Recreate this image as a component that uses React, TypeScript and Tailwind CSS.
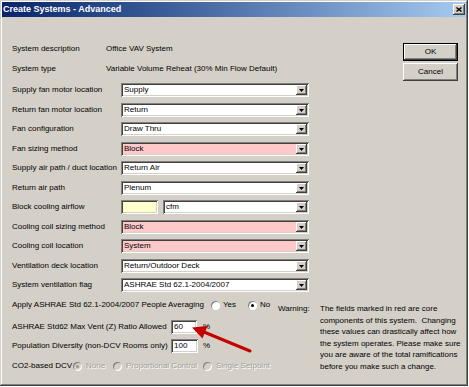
import React from "react";

const sunken =
  "shadow-[inset_1px_1px_0_#808080,inset_-1px_-1px_0_#ffffff,inset_2px_2px_0_#404040,inset_-2px_-2px_0_#d4d0c8]";
const raised =
  "shadow-[inset_-1px_-1px_0_#404040,inset_1px_1px_0_#ffffff,inset_-2px_-2px_0_#808080,inset_2px_2px_0_#d4d0c8]";

function Arrow() {
  return (
    <div className={`w-[11px] h-full bg-[#d4d0c8] ${raised} flex items-center justify-center shrink-0`}>
      <svg width="5" height="3" viewBox="0 0 5 3">
        <path d="M0 0H5L2.5 3Z" fill="#000" />
      </svg>
    </div>
  );
}

function Combo({ text, bg, w }: { text: string; bg: string; w: string }) {
  return (
    <div className={`flex h-[14px] ${w} ${bg} ${sunken} p-[2px]`}>
      <div className="flex-1 pl-[1px] flex items-center leading-none">{text}</div>
      <Arrow />
    </div>
  );
}

function Row({ label, mt, children }: { label: string; mt: string; children: React.ReactNode }) {
  return (
    <div className={`flex items-center h-[14px] ${mt}`}>
      <div className="w-[109px] whitespace-nowrap leading-none">{label}</div>
      {children}
    </div>
  );
}

function Radio({ checked, disabled }: { checked?: boolean; disabled?: boolean }) {
  return (
    <span
      className={`w-[9px] h-[9px] rounded-full flex items-center justify-center shrink-0 shadow-[inset_1px_1px_0_#808080,inset_-1px_-1px_0_#ffffff] ${
        disabled ? "bg-[#d4d0c8]" : "bg-white"
      }`}
    >
      {checked ? (
        <span className={`w-[3px] h-[3px] rounded-full ${disabled ? "bg-[#9a9890]" : "bg-black"}`} />
      ) : null}
    </span>
  );
}

export default function App() {
  const red = "bg-[#ffc9c9]";
  const white = "bg-white";
  const full = "w-[188px]";
  return (
    <div className="relative w-[469px] h-[387px] bg-white font-['Liberation_Sans',Arial,sans-serif] text-[8px] text-black">
      <div className="w-[468px] h-[386px] bg-[#d4d0c8] p-[2px] flex flex-col shadow-[inset_-1px_-1px_0_#404040,inset_1px_1px_0_#d4d0c8,inset_-2px_-2px_0_#808080,inset_2px_2px_0_#ffffff]">
        {/* Title bar */}
        <div className="h-[15px] flex items-center bg-gradient-to-r from-[#0a246a] to-[#a6caf0] shrink-0">
          <span className="pl-[1px] text-white font-bold text-[9px] leading-none whitespace-nowrap">
            Create Systems - Advanced
          </span>
          <div className={`ml-auto mr-[1px] w-[12px] h-[11px] bg-[#d4d0c8] ${raised} flex items-center justify-center`}>
            <svg width="6" height="5" viewBox="0 0 6 5">
              <path d="M0.5 0.5L5.5 4.5M5.5 0.5L0.5 4.5" stroke="#000" strokeWidth="1.4" />
            </svg>
          </div>
        </div>

        {/* Top section */}
        <div className="flex">
          <div className="pl-[10px] flex flex-col">
            <div className="flex items-center h-[14px] mt-[25px]">
              <div className="w-[94px] leading-none">System description</div>
              <div className="leading-none whitespace-nowrap">Office VAV System</div>
            </div>
            <div className="flex items-center h-[14px] mt-[6px]">
              <div className="w-[94px] leading-none">System type</div>
              <div className="leading-none whitespace-nowrap">Variable Volume Reheat (30% Min Flow Default)</div>
            </div>
            <Row label="Supply fan motor location" mt="mt-[7px]">
              <Combo text="Supply" bg={white} w={full} />
            </Row>
            <Row label="Return fan motor location" mt="mt-[6px]">
              <Combo text="Return" bg={white} w={full} />
            </Row>
            <Row label="Fan configuration" mt="mt-[5px]">
              <Combo text="Draw Thru" bg={white} w={full} />
            </Row>
            <Row label="Fan sizing method" mt="mt-[6px]">
              <Combo text="Block" bg={red} w={full} />
            </Row>
            <Row label="Supply air path / duct location" mt="mt-[5px]">
              <Combo text="Return Air" bg={white} w={full} />
            </Row>
            <Row label="Return air path" mt="mt-[6px]">
              <Combo text="Plenum" bg={white} w={full} />
            </Row>
            <Row label="Block cooling airflow" mt="mt-[5px]">
              <div className={`h-[14px] w-[37px] bg-[#ffffcc] ${sunken}`} />
              <div className="ml-[5px]">
                <Combo text="cfm" bg={white} w="w-[146px]" />
              </div>
            </Row>
            <Row label="Cooling coil sizing method" mt="mt-[6px]">
              <Combo text="Block" bg={red} w={full} />
            </Row>
            <Row label="Cooling coil location" mt="mt-[5px]">
              <Combo text="System" bg={red} w={full} />
            </Row>
            <Row label="Ventilation deck location" mt="mt-[6px]">
              <Combo text="Return/Outdoor Deck" bg={white} w={full} />
            </Row>
            <Row label="System ventilation flag" mt="mt-[5px]">
              <Combo text="ASHRAE Std 62.1-2004/2007" bg={white} w={full} />
            </Row>
          </div>
          <div className="ml-[94px] flex flex-col">
            <div className="mt-[26px] w-[55px] h-[18px] bg-black p-[1px]">
              <div className={`w-full h-full bg-[#d4d0c8] ${raised} flex items-center justify-center leading-none`}>
                OK
              </div>
            </div>
            <div className={`mt-[2px] w-[55px] h-[18px] bg-[#d4d0c8] ${raised} flex items-center justify-center leading-none`}>
              Cancel
            </div>
          </div>
        </div>

        {/* Bottom section */}
        <div className="flex pl-[10px]">
          <div className="w-[266px] flex flex-col">
            <div className="flex items-center h-[14px] mt-[6px]">
              <div className="w-[199px] whitespace-nowrap leading-none">
                Apply ASHRAE Std 62.1-2004/2007 People Averaging
              </div>
              <div className="w-[37px] flex items-center">
                <Radio />
                <span className="ml-[3px] leading-none">Yes</span>
              </div>
              <div className="flex items-center">
                <Radio checked />
                <span className="ml-[3px] leading-none">No</span>
              </div>
            </div>
            <div className="flex items-center h-[14px] mt-[8px]">
              <div className="w-[159px] whitespace-nowrap leading-none">ASHRAE Std62 Max Vent (Z) Ratio Allowed</div>
              <div className={`w-[26px] h-[14px] bg-white ${sunken} flex items-center pl-[3px] leading-none`}>60</div>
              <span className="ml-[6px] leading-none">%</span>
            </div>
            <div className="flex items-center h-[14px] mt-[5px]">
              <div className="w-[159px] whitespace-nowrap leading-none">Population Diversity (non-DCV Rooms only)</div>
              <div className={`w-[27px] h-[14px] bg-white ${sunken} flex items-center pl-[3px] leading-none`}>100</div>
              <span className="ml-[5px] leading-none">%</span>
            </div>
            <div className="flex items-center h-[14px] mt-[6px] text-[#a19f98] [text-shadow:1px_1px_0_#ffffff]">
              <div className="w-[61px] whitespace-nowrap leading-none text-black [text-shadow:none]">CO2-based DCV</div>
              <div className="w-[40px] flex items-center">
                <Radio checked disabled />
                <span className="ml-[4px] leading-none">None</span>
              </div>
              <div className="w-[90px] flex items-center">
                <Radio disabled />
                <span className="ml-[4px] leading-none whitespace-nowrap">Proportional Control</span>
              </div>
              <div className="flex items-center">
                <Radio disabled />
                <span className="ml-[4px] leading-none whitespace-nowrap">Single Setpoint</span>
              </div>
            </div>
          </div>
          <div className="flex mt-[11px] leading-[11.5px]">
            <div className="w-[42px]">Warning:</div>
            <div className="whitespace-nowrap">
              <div>The fields marked in red are core</div>
              <div>components of this system.&nbsp; Changing</div>
              <div>these values can drastically affect how</div>
              <div>the system operates. Please make sure</div>
              <div>you are aware of the total ramifications</div>
              <div>before you make such a change.</div>
            </div>
          </div>
        </div>
      </div>

      {/* Red annotation arrow */}
      <svg className="absolute left-0 top-0 pointer-events-none" width="469" height="387" viewBox="0 0 469 387">
        <line x1="250" y1="351" x2="204" y2="332" stroke="#c40000" strokeWidth="3" strokeLinecap="round" />
        <polygon points="192,327.5 207.5,326 202.5,338.5" fill="#c40000" />
      </svg>
    </div>
  );
}
